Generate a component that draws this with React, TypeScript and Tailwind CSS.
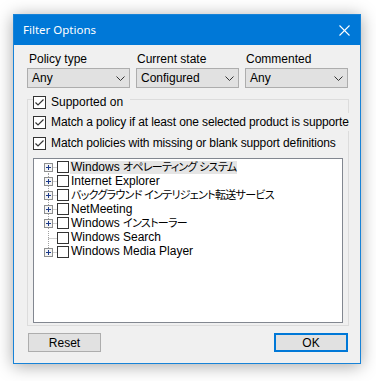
import React from "react";

const uiFont = "[font-family:'Liberation_Sans','Noto_Sans_CJK_JP',sans-serif] [font-feature-settings:'palt']";

function Check({ checked }: { checked: boolean }) {
  return (
    <div className="w-[13px] h-[13px] shrink-0 border border-[#333333] bg-white flex items-center justify-center">
      {checked && (
        <svg width="11" height="11" viewBox="0 0 11 11">
          <polyline points="1.5,5.5 4,8 9.5,2.5" fill="none" stroke="#333333" strokeWidth="1.2" />
        </svg>
      )}
    </div>
  );
}

function TreeCheck() {
  return <div className="w-[12px] h-[12px] shrink-0 border border-[#333333] bg-white" />;
}

function Select({ value }: { value: string }) {
  return (
    <div className="h-[20px] w-[103px] border border-[#adadad] bg-[#e1e1e1] flex items-center justify-between pl-[4px] pr-[4px] text-[12px] text-black">
      <span className="leading-none">{value}</span>
      <svg width="9" height="5" viewBox="0 0 9 5">
        <polyline points="0.5,0.5 4.5,4.5 8.5,0.5" fill="none" stroke="#333333" strokeWidth="1" />
      </svg>
    </div>
  );
}

type Seg = { t: string; jp?: boolean };

const treeItems: { label: Seg[]; plus: boolean; selected?: boolean }[] = [
  { label: [{ t: "Windows " }, { t: "オペレーティング システム", jp: true }], plus: true, selected: true },
  { label: [{ t: "Internet Explorer" }], plus: true },
  { label: [{ t: "バックグラウンド インテリジェント転送サービス", jp: true }], plus: true },
  { label: [{ t: "NetMeeting" }], plus: true },
  { label: [{ t: "Windows " }, { t: "インストーラー", jp: true }], plus: true },
  { label: [{ t: "Windows Search" }], plus: false },
  { label: [{ t: "Windows Media Player" }], plus: true },
];

function TreeRow({ label, plus, selected, first, last }: { label: Seg[]; plus: boolean; selected?: boolean; first: boolean; last: boolean }) {
  return (
    <div className="h-[14.1px] flex items-center">
      <svg width="23" height="14" viewBox="0 0 23 14" className="shrink-0">
        <line x1="14.5" y1={first ? 7 : 0} x2="14.5" y2={last ? 7 : 14} stroke="#a0a0a0" strokeWidth="1" strokeDasharray="1 1" />
        <line x1="14.5" y1="7.5" x2="23" y2="7.5" stroke="#a0a0a0" strokeWidth="1" strokeDasharray="1 1" />
        {plus && (
          <g>
            <rect x="10.5" y="3.5" width="8" height="8" fill="#f4f4f4" stroke="#8e8f8f" strokeWidth="1" />
            <line x1="12" y1="7.5" x2="17" y2="7.5" stroke="#1c3a8a" strokeWidth="1" />
            <line x1="14.5" y1="5" x2="14.5" y2="10" stroke="#1c3a8a" strokeWidth="1" />
          </g>
        )}
      </svg>
      <TreeCheck />
      <span className={`ml-[1px] pl-[1px] pr-[1px] h-[13px] flex items-center text-[12px] leading-[13px] whitespace-nowrap text-black ${selected ? "bg-[#e5e5e5]" : ""}`}>
        {label.map((s, i) =>
          s.jp ? (
            <span key={i} className="text-[11px] tracking-[-0.7px]">{s.t}</span>
          ) : (
            <span key={i} className="whitespace-pre">{s.t}</span>
          )
        )}
      </span>
    </div>
  );
}

export default function App() {
  return (
    <div className={`w-[376px] h-[381px] bg-white pl-[13px] pt-[14px] ${uiFont}`}>
      <div className="w-[348px] h-[350px] border border-[#1883d7] bg-[#f0f0f0] shadow-[0_2px_16px_rgba(0,0,0,0.35)] flex flex-col">
        <div className="h-[30px] shrink-0 bg-[#0078d7] flex items-center justify-between pl-[9px] pr-[10px]">
          <span className="text-white text-[11.5px] [font-family:'Noto_Sans',sans-serif] [font-feature-settings:normal]">Filter Options</span>
          <svg width="11" height="11" viewBox="0 0 11 11">
            <line x1="0.5" y1="0.5" x2="10.5" y2="10.5" stroke="white" strokeWidth="1.1" />
            <line x1="10.5" y1="0.5" x2="0.5" y2="10.5" stroke="white" strokeWidth="1.1" />
          </svg>
        </div>
        <div className="flex flex-col">
          <div className="pt-[7px] pl-[13px] grid grid-cols-[103px_103px_103px] gap-x-[6px]">
            <div className="h-[14px] pl-[2px] text-[12px] leading-[14px] text-black">Policy type</div>
            <div className="h-[14px] pl-[1px] text-[12px] leading-[14px] text-black">Current state</div>
            <div className="h-[14px] pl-[1px] text-[12px] leading-[14px] text-black">Commented</div>
            <div className="mt-[2px]"><Select value="Any" /></div>
            <div className="mt-[2px]"><Select value="Configured" /></div>
            <div className="mt-[2px]"><Select value="Any" /></div>
          </div>
          <div className="mt-[11px] ml-[13px] w-[322px] h-[227px] border border-[#dcdcdc] pl-[5px] flex flex-col">
            <div className="-mt-[4px] h-[13px] flex">
              <div className="flex items-center gap-[5px] bg-[#f0f0f0] pr-[7px] text-[12px] leading-[13px] text-black">
                <Check checked />
                <span>Supported on</span>
              </div>
            </div>
            <div className="mt-[4px] h-[18px] w-[316px] overflow-hidden bg-[#f0f0f0] flex items-center gap-[5px] text-[12px] tracking-[-0.12px] text-black whitespace-nowrap relative">
              <Check checked />
              <span>Match a policy if at least one selected product is supported</span>
            </div>
            <div className="mt-[3px] h-[18px] flex items-center gap-[5px] text-[12px] tracking-[-0.12px] text-black whitespace-nowrap">
              <Check checked />
              <span>Match policies with missing or blank support definitions</span>
            </div>
            <div className="mt-[6px] w-[310px] h-[165px] border border-[#828790] bg-white pt-[1px] flex flex-col">
              {treeItems.map((it, i) => (
                <TreeRow key={i} label={it.label} plus={it.plus} selected={it.selected} first={i === 0} last={i === treeItems.length - 1} />
              ))}
            </div>
          </div>
          <div className="mt-[7px] pl-[14px] pr-[12px] flex justify-between">
            <div className="w-[73px] h-[19px] border border-[#adadad] bg-[#e1e1e1] flex items-center justify-center text-[12px] text-black">Reset</div>
            <div className="w-[74px] h-[19px] border-2 border-[#0078d7] bg-[#e1e1e1] flex items-center justify-center text-[12px] text-black">OK</div>
          </div>
        </div>
      </div>
    </div>
  );
}
